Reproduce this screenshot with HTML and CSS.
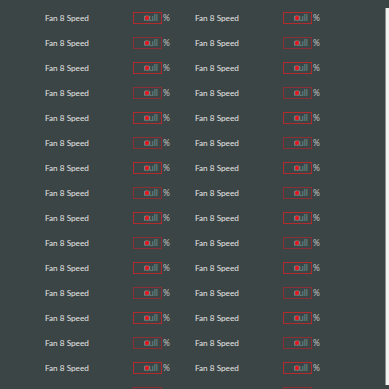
FILE: index.html
```html
<!DOCTYPE html>
<html lang="en">
<head>
<meta charset="UTF-8" />
<title>Fan speeds</title>
<link rel="stylesheet" href="styles.css">
</head>
<body>
<div class="panel">
  <div class="list" id="list"></div>
  <div class="scroll-track"></div>
</div>
<script>
  var list = document.getElementById('list');
  for (var i = 0; i < 16; i++) {
    var row = document.createElement('div');
    row.className = 'row' + (i % 2 ? ' even' : '');
    for (var c = 0; c < 2; c++) {
      row.innerHTML += '<div class="cell"><span class="label">Fan 8 Speed</span>' +
        '<span class="field"><span class="val">null</span><i class="dot"></i></span>' +
        '<span class="unit">%</span></div>';
    }
    list.appendChild(row);
  }
</script>
</body>
</html>
```
FILE: styles.css
```css
html, body {
    margin: 0;
    padding: 0;
    width: 100%;
    height: 100%;
    overflow: hidden;
    background-color: #3b4545;
}
.panel {
    position: relative;
    height: 389px;
    font-family: Lato, "Noto Sans", sans-serif;
}
.list {
    padding-top: 5px;
}
.row {
    display: flex;
    height: 25px;
    align-items: center;
    padding-left: 45px;
}
.cell {
    display: flex;
    align-items: center;
    width: 150px;
}
.label {
    width: 88px;
    font-size: 8.2px;
    color: #e6e6e6;
}
.field {
    position: relative;
    display: flex;
    justify-content: flex-end;
    align-items: center;
    box-sizing: border-box;
    width: 29px;
    height: 12px;
    padding-right: 3px;
    border: 1px solid #b02a2e;
}
.row.even .field {
    border-color: #8a3034;
}
.val {
    font-size: 9px;
    line-height: 10px;
    color: #6c9090;
}
.dot {
    position: absolute;
    left: 11px;
    top: 3px;
    width: 4px;
    height: 4px;
    border-radius: 50%;
    background: #e8141c;
    box-shadow: 0 0 0 1px rgba(200, 150, 150, 0.35);
}
.unit {
    margin-left: 1px;
    font-size: 8.5px;
    color: #c4c4c4;
}
.scroll-track {
    position: absolute;
    right: 0;
    top: 8px;
    bottom: 4px;
    width: 3px;
    background: #f2f2f2;
    border-left: 1px solid #8c9090;
}
```
